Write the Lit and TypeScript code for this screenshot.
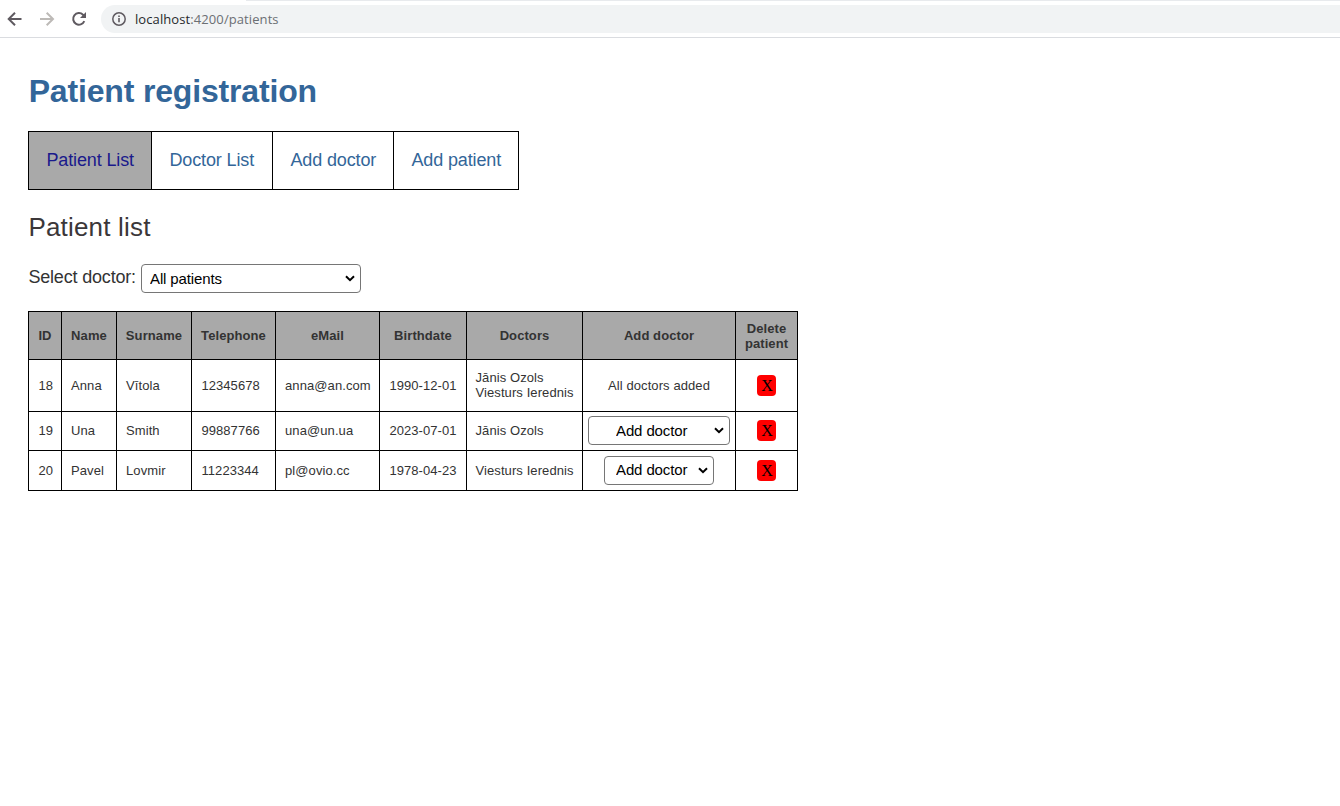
import { LitElement, html, css } from "lit";
import { customElement } from "lit/decorators.js";
import { classMap } from "lit/directives/class-map.js";

interface Patient {
  id: number;
  name: string;
  surname: string;
  phone: string;
  email: string;
  birthdate: string;
  doctors: string[];
  picker: "none" | "wide" | "narrow";
}

const PATIENTS: Patient[] = [
  { id: 18, name: "Anna", surname: "Vītola", phone: "12345678", email: "anna@an.com", birthdate: "1990-12-01", doctors: ["Jānis Ozols", "Viesturs Ierednis"], picker: "none" },
  { id: 19, name: "Una", surname: "Smith", phone: "99887766", email: "una@un.ua", birthdate: "2023-07-01", doctors: ["Jānis Ozols"], picker: "wide" },
  { id: 20, name: "Pavel", surname: "Lovmir", phone: "11223344", email: "pl@ovio.cc", birthdate: "1978-04-23", doctors: ["Viesturs Ierednis"], picker: "narrow" },
];

const selectStyles = css`
  select {
    appearance: none;
    box-sizing: border-box;
    height: 29px;
    padding: 0 0 0 8px;
    border: 1px solid #767676;
    border-radius: 4px;
    background: #fff url("data:image/svg+xml,%3Csvg xmlns='http://www.w3.org/2000/svg' width='10' height='7' viewBox='0 0 10 7'%3E%3Cpath d='M1 1.2 5 5.2 9 1.2' fill='none' stroke='%23000' stroke-width='2'/%3E%3C/svg%3E") no-repeat right 5px top 10px;
    color: #000;
    font: 15px "Liberation Sans", Arial, sans-serif;
    letter-spacing: -0.12px;
  }
`;

@customElement("browser-bar")
export class BrowserBar extends LitElement {
  static styles = css`
    :host { display: flex; box-sizing: border-box; height: 38px; padding-top: 4px; border-bottom: 1px solid #dadce0; background: #fff; }
    .nav { display: flex; width: 101px; flex: none; }
    .nav svg { width: 32px; height: 30px; flex: none; }
    .omnibox { display: flex; flex: 1; align-items: center; height: 28px; margin-top: 1px; border-radius: 14px 0 0 14px; background: #f1f3f4; font: 13px/28px "Open Sans", "Noto Sans", sans-serif; color: #6b6f73; }
    .omnibox svg { width: 16px; height: 16px; margin: 0 8px 0 10px; }
    .url { letter-spacing: 0.09px; white-space: nowrap; }
    .host { color: #27292c; }
    .strip { position: absolute; top: 0; left: 246px; right: 0; height: 1px; background: #e8eaed; }
  `;
  render() {
    return html`
      <div class="strip"></div>
      <div class="nav">
        <svg viewBox="0 0 32 30" fill="none" stroke="#5f5a60" stroke-width="2"><path d="M21.5 15H9M15 8.7 8.7 15l6.3 6.3" /></svg>
        <svg viewBox="0 0 32 30" fill="none" stroke="#bdbab7" stroke-width="2"><path d="M8 15h12.7M14.7 8.7 21 15l-6.3 6.3" /></svg>
        <svg viewBox="0 0 32 30" fill="none" stroke="#5f5a60" stroke-width="2"><path d="M20.3 17.2A5.8 5.8 0 1 1 19 10.7L21 12.7" /><path d="M22 8v6h-6z" fill="#5f5a60" stroke="none" /></svg>
      </div>
      <div class="omnibox">
        <svg viewBox="0 0 16 16"><circle cx="8" cy="8" r="6.2" fill="none" stroke="#5f5a60" stroke-width="1.5" /><path d="M7.2 7h1.6v4.2H7.2zM7.2 4.6h1.6v1.5H7.2z" fill="#5f5a60" /></svg>
        <span class="url"><span class="host">localhost</span>:4200/patients</span>
      </div>
    `;
  }
}

@customElement("patient-table")
export class PatientTable extends LitElement {
  static styles = [selectStyles, css`
    :host { display: block; }
    .table { display: grid; grid-template-columns: 33px 55px 75px 84px 104px 87px 116px 153px 62px; grid-template-rows: 48px 52px 39px 40px; width: max-content; border: solid #000; border-width: 1px 0 0 1px; font-size: 13px; line-height: 15px; color: #333; }
    .cell { display: flex; align-items: center; box-sizing: border-box; padding: 0 0 1px 9px; border: solid #000; border-width: 0 1px 1px 0; white-space: nowrap; letter-spacing: 0.09px; }
    .head { justify-content: center; padding: 0; background: #a9a9a9; font-weight: bold; text-align: center; }
    .center { justify-content: center; padding-left: 0; }
    .digits { padding-left: 9.5px; letter-spacing: 0.05px; }
    .doctors { padding-left: 8.5px; }
    select.wide { width: 142px; padding-left: 27px; }
    select.narrow { width: 110px; padding: 0 0 1px 11px; }
    .delete { box-sizing: border-box; width: 19px; height: 21px; padding: 1px 0 0 1px; border: 0; border-radius: 4px; background: #f00; color: #000; font: 16px/20px "Liberation Serif", "Times New Roman", serif; text-align: center; }
  `];
  private picker(p: Patient) {
    if (p.picker === "none") return "All doctors added";
    return html`<select class=${classMap({ wide: p.picker === "wide", narrow: p.picker === "narrow" })}><option>Add doctor</option></select>`;
  }
  render() {
    const heads = ["ID", "Name", "Surname", "Telephone", "eMail", "Birthdate", "Doctors", "Add doctor"];
    return html`
      <div class="table">
        ${heads.map((h) => html`<div class="cell head">${h}</div>`)}
        <div class="cell head"><span>Delete<br />patient</span></div>
        ${PATIENTS.map((p) => html`
          <div class="cell digits">${p.id}</div>
          <div class="cell">${p.name}</div>
          <div class="cell">${p.surname}</div>
          <div class="cell digits">${p.phone}</div>
          <div class="cell">${p.email}</div>
          <div class="cell digits">${p.birthdate}</div>
          <div class="cell doctors"><div>${p.doctors.map((d) => html`<div>${d}</div>`)}</div></div>
          <div class="cell center">${this.picker(p)}</div>
          <div class="cell center"><button class="delete">X</button></div>
        `)}
      </div>
    `;
  }
}

@customElement("app-root")
export class AppRoot extends LitElement {
  static styles = [selectStyles, css`
    :host { display: block; height: 806px; overflow: hidden; background: #fff; font-family: "Liberation Sans", Arial, sans-serif; }
    main { padding: 34px 28px 0; }
    h1 { margin: 0; padding-left: 0.7px; font-size: 32px; line-height: 38px; letter-spacing: -0.17px; color: #369; }
    nav { display: flex; width: max-content; margin-top: 21px; border: 1px solid #000; }
    nav a { box-sizing: border-box; height: 57px; padding-left: 17.5px; border-right: 1px solid #000; font-size: 18px; line-height: 56px; letter-spacing: -0.14px; white-space: nowrap; color: #369; text-decoration: none; }
    nav a:last-child { border-right: 0; }
    nav a.w1 { width: 123px; background: #a9a9a9; color: #1a1a8c; }
    .w2 { width: 121px; }
    .w3 { width: 121px; }
    .w4 { width: 124px; }
    h2 { margin: 22px 0 0; padding-left: 0.4px; font-size: 26px; line-height: 30px; font-weight: normal; letter-spacing: 0.19px; color: #3b3739; }
    .filter { display: flex; margin-top: 22px; height: 29px; font-size: 18px; line-height: 26px; color: #333; }
    label { box-sizing: border-box; width: 113px; padding-left: 0.4px; letter-spacing: -0.18px; white-space: nowrap; }
    select { width: 220px; }
    patient-table { margin-top: 18px; }
  `];
  render() {
    return html`
      <browser-bar></browser-bar>
      <main>
        <h1>Patient registration</h1>
        <nav>
          <a class="w1">Patient List</a><a class="w2">Doctor List</a><a class="w3">Add doctor</a><a class="w4">Add patient</a>
        </nav>
        <h2>Patient list</h2>
        <div class="filter"><label>Select doctor:</label><select><option>All patients</option></select></div>
        <patient-table></patient-table>
      </main>
    `;
  }
}
